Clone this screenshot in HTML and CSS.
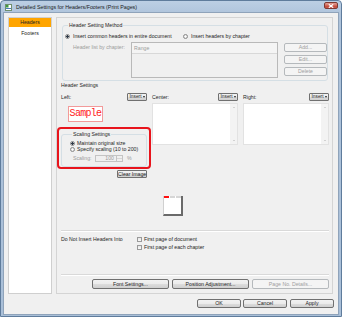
FILE: index.html
```html
<!DOCTYPE html>
<html>
<head>
<meta charset="utf-8">
<link rel="stylesheet" href="styles.css">
</head>
<body>
<div class="window">
  <div class="titlebar">
    <svg class="app-icon" width="7" height="7" viewBox="0 0 7 7">
      <rect x="0.5" y="0.5" width="6" height="6" fill="#fff" stroke="#6f8f6f" stroke-width="1"/>
      <rect x="1" y="1" width="2.5" height="2.5" fill="#3f9a3f"/>
      <rect x="1" y="4" width="5" height="1" fill="#4a7ab8"/>
    </svg>
    <span class="title">Detailed Settings for Headers/Footers (Print Pages)</span>
    <div class="close-btn">
      <svg width="6" height="4" viewBox="0 0 6 4"><path d="M0.8 0.3 L5.2 3.7 M5.2 0.3 L0.8 3.7" stroke="#fff" stroke-width="1.2"/></svg>
    </div>
  </div>
  <div class="client">
    <div class="content">
      <nav class="nav">
        <div class="nav-item active">Headers</div>
        <div class="nav-item">Footers</div>
      </nav>
      <section class="panel">
        <fieldset class="group hsm">
          <legend>Header Setting Method</legend>
          <div class="radio-row">
            <div class="radio first"><span class="rb checked"></span><span>Insert common headers in entire document</span></div>
            <div class="radio"><span class="rb"></span><span>Insert headers by chapter</span></div>
          </div>
          <div class="chapter-row">
            <span class="chapter-label disabled">Header list by chapter:</span>
            <div class="listbox"><div class="list-head">Range</div></div>
            <div class="side-buttons">
              <div class="btn off">Add...</div>
              <div class="btn off">Edit...</div>
              <div class="btn off">Delete</div>
            </div>
          </div>
        </fieldset>

        <div class="section-label">Header Settings</div>

        <div class="hs-grid">
          <div class="col">
            <div class="col-head"><span>Left:</span><div class="btn insert">Insert<span class="caret"></span></div></div>
            <div class="sample">Sample</div>
            <div class="highlight">
              <fieldset class="group scaling">
                <legend>Scaling Settings</legend>
                <div class="radio sc"><span class="rb checked"></span><span>Maintain original size</span></div>
                <div class="radio sc second"><span class="rb"></span><span>Specify scaling (10 to 200)</span></div>
                <div class="scale-row">
                  <span class="scale-label disabled">Scaling:</span>
                  <div class="spin"><span class="spin-val">100</span></div>
                  <div class="spin-btns"><span></span><span></span></div>
                  <span class="disabled pct">%</span>
                </div>
              </fieldset>
            </div>
            <div class="btn clear">Clear Image</div>
          </div>
          <div class="col">
            <div class="col-head"><span>Center:</span><div class="btn insert">Insert<span class="caret"></span></div></div>
            <div class="textbox"><div class="area"></div><div class="vscroll"><span class="up"></span><span class="down"></span></div></div>
          </div>
          <div class="col">
            <div class="col-head"><span>Right:</span><div class="btn insert">Insert<span class="caret"></span></div></div>
            <div class="textbox"><div class="area"></div><div class="vscroll"><span class="up"></span><span class="down"></span></div></div>
          </div>
        </div>

        <div class="preview-area">
          <div class="page"><div class="page-top"><span class="seg red"></span><span class="seg"></span><span class="seg"></span></div></div>
        </div>

        <div class="separator first-sep"></div>

        <div class="exclude-row">
          <span class="exclude-label">Do Not Insert Headers Into</span>
          <div class="checks">
            <div class="check"><span class="cb"></span><span>First page of document</span></div>
            <div class="check"><span class="cb"></span><span>First page of each chapter</span></div>
          </div>
        </div>

        <div class="separator bottom-sep"></div>

        <div class="panel-buttons">
          <div class="btn wide">Font Settings...</div>
          <div class="btn wide">Position Adjustment...</div>
          <div class="btn wide off">Page No. Details...</div>
        </div>
      </section>
    </div>
    <div class="dialog-buttons">
      <div class="btn dlg">OK</div>
      <div class="btn dlg">Cancel</div>
      <div class="btn dlg apply">Apply</div>
    </div>
  </div>
</div>
</body>
</html>
```

FILE: styles.css
```css
* { box-sizing: border-box; }
html, body { margin: 0; padding: 0; }
body {
  width: 342px;
  height: 317px;
  overflow: hidden;
  font-family: "Liberation Sans", Arial, sans-serif;
  font-size: 5.2px;
  line-height: 7px;
  color: #1e1e1e;
  background: #fff;
}

.window {
  width: 342px;
  height: 317px;
  display: flex;
  flex-direction: column;
  border: 1px solid #5f7c9c;
  border-radius: 4px 4px 0 0;
  background: linear-gradient(to bottom, #bccfe4 0, #aec3db 14px, #a9bfd8 100%);
  padding: 0 3px 2px 3px;
}

.titlebar {
  height: 12px;
  display: flex;
  align-items: center;
  padding-left: 1px;
}
.app-icon { flex: none; margin-right: 4px; }
.title { font-size: 5.3px; color: #1a1a1a; white-space: nowrap; }
.close-btn {
  margin-left: auto;
  width: 14px;
  height: 7px;
  margin-top: -3px;
  border: 1px solid #7e3a33;
  border-radius: 2px;
  background: linear-gradient(to bottom, #e4a296 0, #d0685a 50%, #c24a3b 51%, #c9584a 100%);
  display: flex;
  align-items: center;
  justify-content: center;
}

.client {
  flex: 1;
  background: #f0f0f0;
  box-shadow: 0 0 0 1px #8fa3ba;
  display: flex;
  flex-direction: column;
}

.content {
  display: flex;
  gap: 4px;
  padding: 4px 5px 0 4px;
}

.nav {
  width: 44px;
  height: 277px;
  background: #fff;
  border: 1px solid #cfcfcf;
  display: flex;
  flex-direction: column;
}
.nav-item {
  height: 10px;
  line-height: 10px;
  text-align: center;
  color: #222;
}
.nav-item.active {
  background: #ffa500;
  height: 9px;
  line-height: 9px;
  margin-bottom: 1px;
}

.panel {
  width: 277px;
  height: 277px;
  border: 1px solid #d4d4d4;
  padding: 4px 3px 4px 4px;
  display: flex;
  flex-direction: column;
}

fieldset.group {
  margin: 0;
  padding: 0;
  border: 1px solid #d5dfe5;
  border-radius: 3px;
  min-width: 0;
}
fieldset.group legend {
  padding: 0 1px;
  margin-left: 3px;
  line-height: 7px;
}

.hsm {
  margin: 0 1px 0 1px !important;
  padding: 0 0 2px 2px !important;
}
.radio-row {
  display: flex;
  margin-top: 4px;
  height: 7px;
}
.radio {
  display: flex;
  align-items: center;
  gap: 3px;
  white-space: nowrap;
}
.radio.first { width: 118px; }
.rb {
  flex: none;
  width: 5px;
  height: 5px;
  border-radius: 50%;
  border: 1px solid #8a8a8a;
  background: radial-gradient(circle, #ffffff 0, #dcdcdc 100%);
}
.rb.checked {
  background: radial-gradient(circle, #2f3a48 0, #2f3a48 1px, #e6e6e6 1.4px);
}

.chapter-row {
  display: flex;
  margin-top: 2px;
  padding-left: 8px;
  height: 36px;
}
.chapter-label {
  width: 58px;
  margin-top: 2px;
  white-space: nowrap;
}
.disabled { color: #9c9c9c; }
.listbox {
  width: 147px;
  height: 36px;
  border: 1px solid #b9b9b9;
  background: #f0f0f0;
}
.list-head {
  height: 11px;
  line-height: 10px;
  padding-left: 2px;
  color: #9c9c9c;
  border-bottom: 1px solid #d8d8d8;
  background: #f4f4f4;
}
.side-buttons {
  margin-left: 6px;
  margin-top: 1px;
  width: 43px;
  display: flex;
  flex-direction: column;
  gap: 3px;
}

.btn {
  height: 9px;
  line-height: 7px;
  text-align: center;
  border: 1px solid #707070;
  border-radius: 2px;
  background: linear-gradient(to bottom, #f2f2f2 0, #ebebeb 50%, #dddddd 51%, #cfcfcf 100%);
  color: #1e1e1e;
  white-space: nowrap;
}
.btn.off {
  border-color: #b5b9bc;
  background: #f4f4f4;
  color: #a0a0a0;
}

.section-label {
  margin-top: 1px;
  padding-left: 0;
  height: 7px;
}

.hs-grid {
  display: grid;
  grid-template-columns: 86px 86px 86px;
  column-gap: 5px;
  margin-top: 4px;
  align-items: start;
}
.col {
  display: flex;
  flex-direction: column;
}
.col-head {
  height: 8px;
  display: flex;
  align-items: center;
  justify-content: space-between;
}
.btn.insert {
  height: 8px;
  width: 20px;
  line-height: 6px;
  border-radius: 1px;
  display: flex;
  align-items: center;
  justify-content: center;
  gap: 1px;
  font-size: 4.8px;
}
.caret {
  width: 0;
  height: 0;
  border-left: 1.5px solid transparent;
  border-right: 1.5px solid transparent;
  border-top: 2px solid #222;
}

.sample {
  margin-top: 5px;
  margin-left: 7px;
  width: 35px;
  height: 16px;
  border: 1px solid #f29a9a;
  background: #fff;
  color: #ff1a1a;
  font-family: "Liberation Mono", "DejaVu Sans Mono", monospace;
  font-size: 10px;
  letter-spacing: -0.7px;
  line-height: 14px;
  text-align: center;
}

.highlight {
  margin: 5px -4px 0 -4px;
  height: 42px;
  border: 2px solid #e8141c;
  border-radius: 4px;
  padding: 2px 2px 0 2px;
}
.scaling {
  padding: 0 0 4px 8px !important;
}
.scaling legend { margin-left: 2px !important; }
.radio.sc {
  gap: 2px;
  height: 6px;
  margin-top: 2px;
}
.radio.sc.second { margin-top: 0.5px; }
.scale-row {
  display: flex;
  align-items: center;
  height: 7px;
  margin-top: 2.5px;
  padding-left: 3px;
}
.scale-label { width: 22px; }
.spin {
  width: 22px;
  height: 7px;
  border: 1px solid #c4c4c4;
  background: #f0f0f0;
  text-align: right;
  padding-right: 2px;
  line-height: 5px;
  color: #9c9c9c;
}
.spin-btns {
  width: 6px;
  height: 7px;
  display: flex;
  flex-direction: column;
  border: 1px solid #c4c4c4;
  border-left: none;
  background: #f0f0f0;
}
.spin-btns span { flex: 1; }
.spin-btns span:first-child { border-bottom: 1px solid #d6d6d6; }
.pct { margin-left: 4px; }

.btn.clear {
  align-self: flex-end;
  margin-top: 1px;
  width: 30px;
  height: 8px;
  line-height: 6px;
  border-radius: 1px;
}

.textbox {
  margin-top: 2px;
  height: 42px;
  display: flex;
  border: 1px solid #e2e2e2;
  background: #fff;
}
.textbox .area { flex: 1; }
.vscroll {
  width: 7px;
  background: #f3f3f3;
  display: flex;
  flex-direction: column;
  justify-content: space-between;
  align-items: center;
  padding: 3px 0 3px 0;
}
.vscroll .up {
  width: 0; height: 0;
  border-left: 1px solid transparent;
  border-right: 1px solid transparent;
  border-bottom: 1.5px solid #b0b0b0;
}
.vscroll .down {
  width: 0; height: 0;
  border-left: 1px solid transparent;
  border-right: 1px solid transparent;
  border-top: 1.5px solid #b0b0b0;
}

.preview-area {
  margin-top: 18px;
  padding-left: 102px;
  height: 20px;
}
.page {
  width: 20px;
  height: 20px;
  background: #fff;
  border-left: 1px solid #d0d0d0;
  border-right: 2px solid #6a6a6a;
  border-bottom: 2px solid #6a6a6a;
}
.page-top {
  display: flex;
  gap: 1px;
  height: 2px;
}
.seg { flex: 1; background: #d6d6d6; }
.seg.red { background: #ff1010; }

.separator {
  height: 2px;
  border-top: 1px solid #d9d9d9;
  border-bottom: 1px solid #ffffff;
  flex: none;
}
.first-sep { margin-top: 14px; }
.bottom-sep { margin-top: auto; }

.exclude-row {
  display: flex;
  margin-top: 3px;
  line-height: 8px;
}
.exclude-label { width: 76px; white-space: nowrap; }
.checks { display: flex; flex-direction: column; }
.check { display: flex; align-items: center; gap: 2px; height: 8px; white-space: nowrap; }
.cb {
  flex: none;
  width: 5px;
  height: 5px;
  border: 1px solid #9a9a9a;
  background: linear-gradient(to bottom, #e6e6e6, #fafafa);
}

.panel-buttons {
  display: flex;
  justify-content: flex-end;
  gap: 3px;
  margin-top: 3px;
}
.btn.wide {
  width: 77px;
  height: 10px;
  line-height: 8px;
}

.dialog-buttons {
  display: flex;
  justify-content: flex-end;
  gap: 2px;
  margin-top: 5px;
  padding-right: 4px;
}
.btn.dlg {
  width: 44px;
  height: 9px;
  line-height: 7px;
}
.btn.apply { margin-left: 1px; }
```
